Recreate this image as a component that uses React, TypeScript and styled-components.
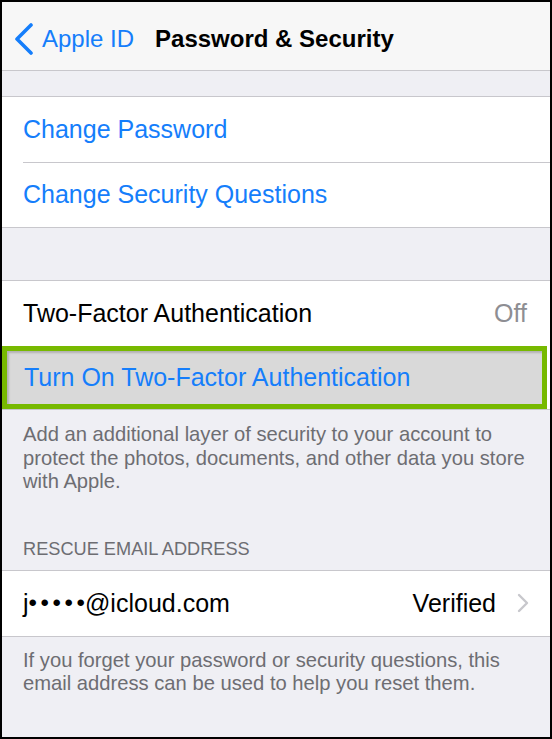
import React from "react";
import styled, { createGlobalStyle } from "styled-components";

const GlobalStyle = createGlobalStyle`
  html, body {
    margin: 0;
    padding: 0;
    background: #000;
  }
  body {
    font-family: "Liberation Sans", Arial, sans-serif;
    -webkit-font-smoothing: antialiased;
  }
`;

const Frame = styled.div`
  width: 552px;
  height: 739px;
  box-sizing: border-box;
  border: 2px solid #000;
  background: #efeff4;
  overflow: hidden;
  display: flex;
  flex-direction: column;
`;

const NavBar = styled.div`
  height: 69px;
  flex-shrink: 0;
  display: flex;
  align-items: center;
  padding-left: 12px;
  padding-top: 5px;
  box-sizing: border-box;
  background: #f7f7f7;
  border-bottom: 1px solid #c8c7cc;
`;

const BackButton = styled.div`
  display: flex;
  align-items: center;
  gap: 8px;
  color: #157efb;
  font-size: 24px;
  margin-right: 21px;
`;

const Title = styled.div`
  font-size: 24px;
  font-weight: 700;
  color: #000;
`;

const Spacer = styled.div<{ $h: number }>`
  height: ${(p) => p.$h}px;
  flex-shrink: 0;
`;

const Group = styled.div`
  background: #fff;
  border-top: 1px solid #c8c7cc;
  border-bottom: 1px solid #c8c7cc;
  flex-shrink: 0;
`;

const Row = styled.div<{ $highlight?: boolean }>`
  position: relative;
  height: 65px;
  box-sizing: border-box;
  display: flex;
  align-items: center;
  padding: 0 23px 0 21px;
  font-size: 25px;

  & + &::before {
    content: "";
    position: absolute;
    top: 0;
    left: 21px;
    right: 0;
    height: 1px;
    background: #c8c7cc;
  }

  ${(p) =>
    p.$highlight &&
    `
    height: 63px;
    margin-right: 3px;
    padding-left: 17px;
    background: #d9d9d9;
    border: 5px solid #77b900;
    box-shadow: inset 2px 2px 2px rgba(0, 0, 0, 0.18);
    &::before { display: none; }
  `}
`;

const Label = styled.span<{ $tone?: "blue" | "black" }>`
  flex: 1;
  color: ${(p) => (p.$tone === "blue" ? "#157efb" : "#000")};
`;

const Dots = styled.span`
  font-size: 24px;
  letter-spacing: 3.6px;
  margin-right: -3.6px;
  position: relative;
  top: -1px;
`;

const Detail = styled.span<{ $muted?: boolean }>`
  color: ${(p) => (p.$muted ? "#8e8e93" : "#000")};
`;

const Chevron = styled.svg`
  margin-left: 21px;
  margin-right: -2px;
`;

const Footer = styled.p<{ $top: number }>`
  margin: 0;
  padding: ${(p) => p.$top}px 18px 0 21px;
  font-size: 20.2px;
  line-height: 23.5px;
  color: #6d6d72;
  flex-shrink: 0;
`;

const SectionHeader = styled.div`
  padding: 0 21px 10px;
  margin-top: 44px;
  font-size: 18.2px;
  line-height: 22px;
  color: #6d6d72;
  text-transform: uppercase;
  flex-shrink: 0;
`;

const BackIcon = () => (
  <svg width="20" height="32" viewBox="0 0 20 32">
    <path
      d="M17 2 L3 16 L17 30"
      fill="none"
      stroke="#157efb"
      strokeWidth="3.6"
      strokeLinecap="round"
      strokeLinejoin="round"
    />
  </svg>
);

export default function App() {
  return (
    <>
      <GlobalStyle />
      <Frame>
        <NavBar>
          <BackButton>
            <BackIcon />
            Apple ID
          </BackButton>
          <Title>Password &amp; Security</Title>
        </NavBar>

        <Spacer $h={25} />
        <Group>
          <Row>
            <Label $tone="blue">Change Password</Label>
          </Row>
          <Row>
            <Label $tone="blue">Change Security Questions</Label>
          </Row>
        </Group>

        <Spacer $h={52} />
        <Group>
          <Row>
            <Label>Two-Factor Authentication</Label>
            <Detail $muted>Off</Detail>
          </Row>
          <Row $highlight>
            <Label $tone="blue">Turn On Two-Factor Authentication</Label>
          </Row>
        </Group>
        <Footer $top={13}>
          Add an additional layer of security to your account to protect the
          photos, documents, and other data you store with Apple.
        </Footer>

        <SectionHeader>Rescue Email Address</SectionHeader>
        <Group>
          <Row>
            <Label>
              j<Dots>•••••</Dots>@icloud.com
            </Label>
            <Detail>Verified</Detail>
            <Chevron width="12" height="20" viewBox="0 0 12 20">
              <path
                d="M2 2 L10 10 L2 18"
                fill="none"
                stroke="#c7c7cc"
                strokeWidth="2.4"
                strokeLinecap="round"
                strokeLinejoin="round"
              />
            </Chevron>
          </Row>
        </Group>
        <Footer $top={12}>
          If you forget your password or security questions, this email address
          can be used to help you reset them.
        </Footer>
      </Frame>
    </>
  );
}
